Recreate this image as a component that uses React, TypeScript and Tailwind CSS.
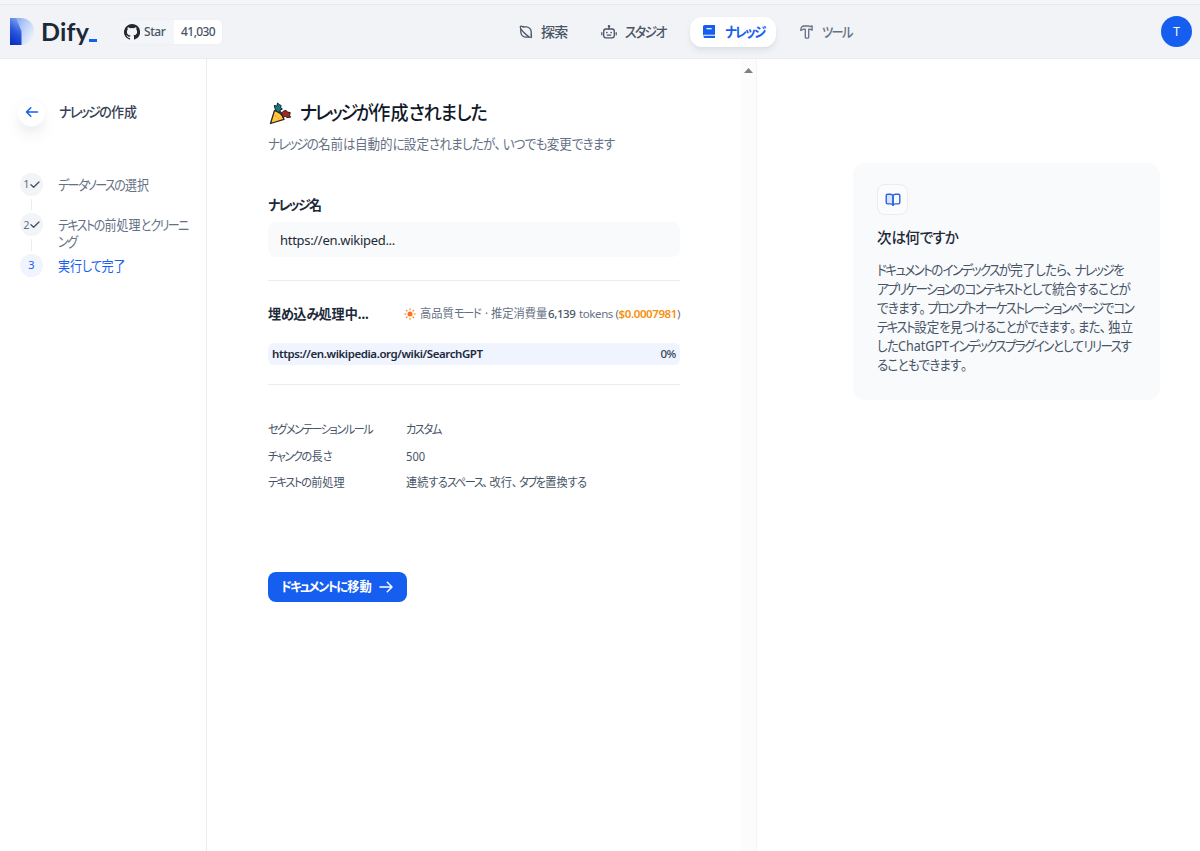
import React from 'react';

type Step = { label: string[]; done: boolean };

const steps: Step[] = [
  { label: ['データソースの選択'], done: true },
  { label: ['テキストの前処理とクリーニ', 'ング'], done: true },
  { label: ['実行して完了'], done: false },
];

const rules = [
  { name: 'セグメンテーションルール', value: 'カスタム' },
  { name: 'チャンクの長さ', value: '500' },
  { name: 'テキストの前処理', value: '連続するスペース、改行、タブを置換する' },
];

const nextLines = [
  'ドキュメントのインデックスが完了したら、ナレッジを',
  'アプリケーションのコンテキストとして統合することが',
  'できます。プロンプトオーケストレーションページでコン',
  'テキスト設定を見つけることができます。また、独立',
  'したChatGPTインデックスプラグインとしてリリースす',
  'ることもできます。',
];

// Sets kana tighter than kanji, and leaves some room after punctuation
const Jp = ({ text }: { text: string }) => (
  <>
    {text.split(/([ァ-ヶー]+|[ぁ-ん]+|[、。])/).map((run, idx) => {
      if (/^[ァ-ヶー]/.test(run)) return <span key={idx} className="tracking-[-0.13em]">{run}</span>;
      if (/^[ぁ-ん]/.test(run)) return <span key={idx} className="tracking-[-0.06em]">{run}</span>;
      if (/^[、。]/.test(run)) return <span key={idx} className="tracking-[0.14em]">{run}</span>;
      return <span key={idx}>{run}</span>;
    })}
  </>
);

const DifyLogo = () => (
  <div className="flex items-center">
    <svg width="24" height="27" viewBox="0 0 24 27">
      <defs>
        <linearGradient id="stem" x1="0.3" y1="1" x2="0.6" y2="0">
          <stop offset="0" stopColor="#0b2fc4" />
          <stop offset="0.5" stopColor="#2a56dc" />
          <stop offset="1" stopColor="#7ea2f0" />
        </linearGradient>
        <linearGradient id="bowl" x1="0" y1="0" x2="1" y2="0.7">
          <stop offset="0" stopColor="#6f97ee" />
          <stop offset="0.5" stopColor="#b4caf8" />
          <stop offset="1" stopColor="#edf2fd" />
        </linearGradient>
      </defs>
      <path d="M0 0h10.500C18.500 0 24 5.500 24 13.500S18.500 27 11.500 27z" fill="url(#bowl)" />
      <path d="M0 0h6L11.500 13v14H0z" fill="url(#stem)" />
    </svg>
    <span className="ml-[7px] h-[34px] font-['Lato'] text-[25px] leading-[32px] font-bold tracking-[0.2px] text-[#1d2939]">Dify</span>
    <span className="mt-[17px] h-[3px] w-[8px] bg-[#155eef]" />
  </div>
);

const GithubIcon = () => (
  <svg width="16" height="16" viewBox="0 0 16 16" fill="#24292f">
    <path d="M8 0a8 8 0 0 0-2.530 15.590c.4.070.55-.17.55-.38v-1.330c-2.230.48-2.700-1.070-2.700-1.070-.36-.92-.89-1.170-.89-1.170-.73-.5.050-.49.050-.49.8.060 1.230.83 1.230.83.72 1.230 1.880.87 2.340.67.070-.52.28-.88.5-1.080-1.770-.2-3.640-.89-3.640-3.950 0-.87.31-1.590.82-2.150-.080-.2-.36-1.020.080-2.120 0 0 .67-.21 2.200.82a7.600 7.600 0 0 1 4 0c1.530-1.040 2.200-.82 2.200-.82.44 1.100.16 1.920.080 2.120.51.56.82 1.270.82 2.150 0 3.070-1.870 3.750-3.650 3.950.29.25.54.73.54 1.480v2.190c0 .21.150.46.55.38A8 8 0 0 0 8 0z" />
  </svg>
);

const ExploreIcon = () => (
  <svg width="14" height="14" viewBox="0 0 14 14" fill="none" stroke="#495464" strokeWidth="1.3" strokeLinecap="round" strokeLinejoin="round">
    <path d="M4.300 1.900h2.900a5 5 0 0 1 5 5v3M9.700 12.100H6.800a5 5 0 0 1-5-5v-3" />
    <path d="M4.300 1.900C2.800 1.100 1.700 1 1.400 1.500c-.5 1 1.400 3.900 4 6.500s5.500 4.600 6.700 4.300c.6-.3.500-1.200.1-2.400" />
  </svg>
);

const RobotIcon = () => (
  <svg width="16" height="14" viewBox="0 0 16 14" fill="none" stroke="#495464" strokeWidth="1.3" strokeLinecap="round" strokeLinejoin="round">
    <rect x="2.700" y="4" width="10.600" height="8.800" rx="2.200" />
    <path d="M8 4V1.800M.8 7.500v2.300M15.200 7.500v2.300M6.300 10.200h3.400" strokeWidth="1.200" />
    <circle cx="8" cy="1.300" r=".6" />
    <path d="M5.800 7.600h.1M10.100 7.600h.1" strokeWidth="1.600" />
  </svg>
);

const KnowledgeIcon = () => (
  <svg width="12" height="14" viewBox="0 0 12 14">
    <path d="M1.800 0H12v9.800H1.500A1.500 1.500 0 0 0 0 11V1.800C0 .8.8 0 1.800 0z" fill="#155eef" />
    <path d="M3.500 3.700h5.200" stroke="#fff" strokeWidth="1.200" />
    <path d="M1.600 10.700H12V13H1.600a1.150 1.150 0 0 1 0-2.300z" fill="#155eef" />
  </svg>
);

const ToolIcon = () => (
  <svg width="13" height="14" viewBox="0 0 13 14" fill="none" stroke="#667085" strokeWidth="1.3" strokeLinejoin="round">
    <path d="M.8 4.800C.8 2.300 2.200 1 4 1h5l.9.700 2.200-.9v4.400l-2.200-1H8.700v8c0 .7-.4 1-1 1H6.300c-.6 0-1-.4-1-1V4.200H3.500L.8 5.500z" />
  </svg>
);

const PartyPopper = () => (
  <svg width="24" height="24" viewBox="0 0 24 24">
    <path d="M2.500 22.500 6.500 9.500c4 .8 8.500 4.500 9.500 8.800z" fill="#ffc83d" stroke="#30211b" strokeWidth="1.300" strokeLinejoin="round" />
    <path d="M7 7.500 6.300 4.400 9 5.200 9.500 2l2.300 1.900 1.300.6-.5 2.400 1.800 1-2.800 1.800-.6 2.300-2.200-1.800z" fill="#147b83" stroke="#15242a" strokeWidth="1" />
    <path d="m13.500 12 1.800-1.800 2.700-.9 1.500 1.800 2.700.4-.6 2.700.9 2-3.500.3-1.700-1.300-2.400 1.600z" fill="#9c2b20" stroke="#351411" strokeWidth="1" />
    <path d="m10.500 10.500 1.500-1.200 2.500 3.200-.2 1.500z" fill="#273449" />
    <circle cx="7.800" cy="15" r=".8" fill="#e8912d" />
    <circle cx="10.500" cy="17.500" r=".7" fill="#e8912d" />
  </svg>
);

const SunIcon = () => (
  <svg width="12" height="12" viewBox="0 0 12 12" className="shrink-0" stroke="#f97316" strokeWidth="1.100" strokeLinecap="round">
    <circle cx="6" cy="6" r="2.500" fill="#f97316" stroke="none" />
    <path d="M6 .8v1M6 10.200v1M.8 6h1M10.200 6h1M2.300 2.300l.7.700M9 9l.7.700M9.700 2.300 9 3M3 9l-.7.700" />
  </svg>
);

const ArrowIcon = ({ back = false }: { back?: boolean }) => (
  <svg width="14" height="12" viewBox="0 0 14 12" fill="none" stroke={back ? '#155eef' : '#fff'} strokeWidth="1.500" strokeLinecap="round" strokeLinejoin="round">
    {back ? <path d="M12.500 6h-11M5.800 1.700 1.500 6l4.300 4.300" /> : <path d="M1 6h12M8.300 1.300 13 6l-4.700 4.700" />}
  </svg>
);

const CheckIcon = () => (
  <svg width="10" height="8" viewBox="0 0 10 8" fill="none" stroke="#475467" strokeWidth="1.400" strokeLinecap="round" strokeLinejoin="round">
    <path d="M1 3.800 3.600 6.300 9 1" />
  </svg>
);

const BookIcon = () => (
  <svg width="16" height="14" viewBox="0 0 16 14" fill="none" stroke="#2a62e0" strokeWidth="1.400" strokeLinejoin="round" strokeLinecap="round">
    <path d="M8 2.800C7.500 1.700 6.600 1.200 5.400 1.200H2.600c-.9 0-1.400.5-1.400 1.400v6.900c0 .9.500 1.400 1.400 1.400h3.100c1.200 0 2 .4 2.300 1.500z" fill="#d6e4ff" />
    <path d="M8 2.800c.5-1.100 1.400-1.600 2.600-1.600h2.800c.9 0 1.400.5 1.400 1.400v6.900c0 .9-.5 1.400-1.400 1.400h-3.100c-1.200 0-2 .4-2.300 1.500z" />
  </svg>
);

const Header = () => (
  <header className="flex h-[59px] shrink-0 flex-col border-b border-[#eaecf0] bg-[#f1f3f7]">
    <div className="h-[5px] shrink-0 border-b border-[#e6e8ec] bg-[#f4f5f8]" />
    <div className="flex flex-1 items-center pr-2 pl-[10px]">
      <div className="flex w-[509px] items-center">
        <DifyLogo />
        <div className="ml-[21px] flex h-[26px] items-center overflow-hidden rounded-md border border-[#eef0f3] bg-[#f4f5f8]">
          <div className="flex w-[55px] items-center gap-[4px] pl-[5px] text-[12px] font-medium text-[#475467]">
            <GithubIcon />
            <span className="tracking-[-0.5px]">Star</span>
          </div>
          <div className="flex h-full w-[48px] items-center justify-center bg-white text-[12px] font-medium tracking-[-0.600px] text-[#475467]">41,030</div>
        </div>
      </div>
      <nav className="flex flex-1 items-center text-[14px] font-medium text-[#495464]">
        <div className="flex w-[82px] items-center gap-[8px]">
          <ExploreIcon />
          <span className="tracking-[-0.8px]">探索</span>
        </div>
        <div className="flex w-[89px] items-center gap-[8px]">
          <RobotIcon />
          <span className="origin-left scale-x-[0.92] whitespace-nowrap"><Jp text="スタジオ" /></span>
        </div>
        <div className="flex h-[30px] w-[86px] items-center gap-[10px] rounded-xl bg-white pl-[13px] text-[#155eef] shadow-md shadow-gray-300/60">
          <KnowledgeIcon />
          <span className="origin-left scale-x-[0.9] font-bold whitespace-nowrap"><Jp text="ナレッジ" /></span>
        </div>
        <div className="ml-[24px] flex items-center gap-[9px] text-[#667085]">
          <ToolIcon />
          <span className="origin-left scale-x-[0.87] whitespace-nowrap"><Jp text="ツール" /></span>
        </div>
      </nav>
      <div className="flex size-[31px] items-center justify-center rounded-full bg-[#155eef] text-[12px] text-white">T</div>
    </div>
  </header>
);

const Sidebar = () => (
  <aside className="flex w-[207px] shrink-0 flex-col border-r border-[#eaecf0] pt-[38px] pl-[17px]">
    <div className="flex h-[30px] items-center">
      <button className="flex size-[29px] items-center justify-center rounded-full border border-gray-50 bg-white shadow-lg shadow-gray-200/80">
        <ArrowIcon back />
      </button>
      <span className="ml-[13px] origin-left scale-x-[0.93] pb-px text-[14px] font-medium whitespace-nowrap text-[#344054]"><Jp text="ナレッジの作成" /></span>
    </div>
    <ol className="mt-[46px]">
      {steps.map((step, idx) => (
        <li key={idx} className="flex h-[40.300px] items-start pl-[3px]">
          <div className="flex h-full w-[23px] flex-col items-center">
            <div className={`flex size-[23px] shrink-0 items-center justify-center rounded-full text-[11px] ${step.done ? 'bg-[#f2f4f7] text-[#667085]' : 'bg-[#eff4ff] text-[#155eef]'}`}>
              {idx + 1}
              {step.done && <CheckIcon />}
            </div>
            {idx < steps.length - 1 && <div className="my-[3px] w-px flex-1 bg-[#eaecf0]" />}
          </div>
          <div className={`ml-[15px] origin-left scale-x-[0.89] pt-[4px] text-[13.500px] leading-[17px] whitespace-nowrap ${step.done ? 'text-[#667085]' : 'text-[#155eef]'}`}>
            {step.label.map((line) => (
              <div key={line}><Jp text={line} /></div>
            ))}
          </div>
        </li>
      ))}
    </ol>
  </aside>
);

const Main = () => (
  <main className="flex w-[534px] shrink-0 flex-col pt-[39px] pl-[61px] text-[#1d2939]">
    <div className="flex w-[412px] flex-col">
      <h1 className="flex h-[30px] items-center gap-[8px] text-[19px] font-medium text-[#101828]">
        <PartyPopper />
        <span className="origin-left scale-x-[0.952] pt-px whitespace-nowrap"><Jp text="ナレッジが作成されました" /></span>
      </h1>
      <p className="flex h-[30px] items-center text-[14px] text-[#667085]">
        <span className="origin-left scale-x-[0.896] whitespace-nowrap"><Jp text="ナレッジの名前は自動的に設定されましたが、いつでも変更できます" /></span>
      </p>
      <div className="mt-[37px] flex h-[20px] items-center text-[13.500px] font-bold">
        <span className="origin-left scale-x-[0.96] whitespace-nowrap"><Jp text="ナレッジ名" /></span>
      </div>
      <div className="mt-[7px] flex h-[35px] items-center rounded-lg bg-[#f9fafb] px-[12px] pt-[2px] text-[13px] tracking-[-0.300px]">https://en.wikiped...</div>
      <div className="mt-[23px] h-px bg-[#eaecf0]" />
      <div className="mt-[22px] flex h-[22px] items-center">
        <div className="w-[136px] shrink-0 text-[13.500px] font-bold">
          <span className="inline-block origin-left scale-x-[0.97] whitespace-nowrap"><Jp text="埋め込み処理中..." /></span>
        </div>
        <SunIcon />
        <div className="ml-[4px] flex items-center text-[12px] whitespace-nowrap text-[#667085]">
          <span className="w-[128px] shrink-0">
            <span className="inline-block origin-left scale-x-[0.94]"><Jp text="高品質モード" /><span className="ml-[2px]"><Jp text=" · 推定消費量" /></span></span>
          </span>
          <span className="w-[28px] shrink-0 text-[11.500px] font-medium tracking-[-0.400px] text-[#475467]">6,139</span>
          <span className="ml-[3px] text-[11.500px] tracking-[-0.400px]">tokens (<span className="font-semibold text-[#f79009]">$0.0007981</span>)</span>
        </div>
      </div>
      <div className="mt-[18px] flex h-[22px] items-center justify-between rounded-md bg-[#eff4ff] px-[4px] text-[11.500px] font-semibold">
        <span className="tracking-[-0.420px]">https://en.wikipedia.org/wiki/SearchGPT</span>
        <span className="font-medium tracking-[-0.400px] text-[#344054]">0%</span>
      </div>
      <div className="mt-[19px] h-px bg-[#eaecf0]" />
      <dl className="mt-[32px] text-[12px] text-[#475467]">
        {rules.map((rule) => (
          <div key={rule.name} className="flex h-[26.500px] items-center whitespace-nowrap">
            <dt className="w-[138px]">
              <span className="inline-block origin-left scale-x-[0.93]"><Jp text={rule.name} /></span>
            </dt>
            <dd className="origin-left scale-x-[0.93]"><Jp text={rule.value} /></dd>
          </div>
        ))}
      </dl>
      <button className="mt-[75.500px] flex h-[30px] w-[139px] items-center rounded-lg bg-[#155eef] pl-[13px] text-[13px] font-bold text-white">
        <span className="w-[98px] text-left">
          <span className="inline-block origin-left scale-x-[0.94] whitespace-nowrap"><Jp text="ドキュメントに移動" /></span>
        </span>
        <ArrowIcon />
      </button>
    </div>
  </main>
);

const NextStep = () => (
  <section className="flex-1 pt-[104px] pl-[96px]">
    <div className="h-[237px] w-[307px] rounded-xl bg-[#f9fafb] px-[24px] pt-[21px]">
      <div className="flex size-[31px] items-center justify-center rounded-lg border border-[#eaecf0] bg-[#fcfcfd]">
        <BookIcon />
      </div>
      <h2 className="mt-[10px] h-[24px] text-[15px] leading-[24px] font-medium text-[#1d2939]">
        <span className="inline-block origin-left scale-x-[0.97]"><Jp text="次は何ですか" /></span>
      </h2>
      <div className="mt-[11px] text-[14px] leading-[19.100px] whitespace-nowrap text-[#475467]">
        {nextLines.map((line) => (
          <div key={line} className="origin-left scale-x-[0.895]"><Jp text={line} /></div>
        ))}
      </div>
    </div>
  </section>
);

export default function App() {
  return (
    <div className="flex h-[851px] w-[1200px] flex-col overflow-hidden bg-white font-['Noto_Sans','Noto_Sans_CJK_JP',sans-serif] [font-feature-settings:'palt']">
      <Header />
      <div className="flex flex-1">
        <Sidebar />
        <Main />
        <div className="flex w-[16px] shrink-0 justify-center border-r border-[#f2f4f7] bg-[#fcfcfc] pt-[9px] pr-px">
          <svg width="9" height="5" viewBox="0 0 9 5" fill="#7f7f7f">
            <path d="M4.500 0 9 5H0z" />
          </svg>
        </div>
        <NextStep />
      </div>
    </div>
  );
}
